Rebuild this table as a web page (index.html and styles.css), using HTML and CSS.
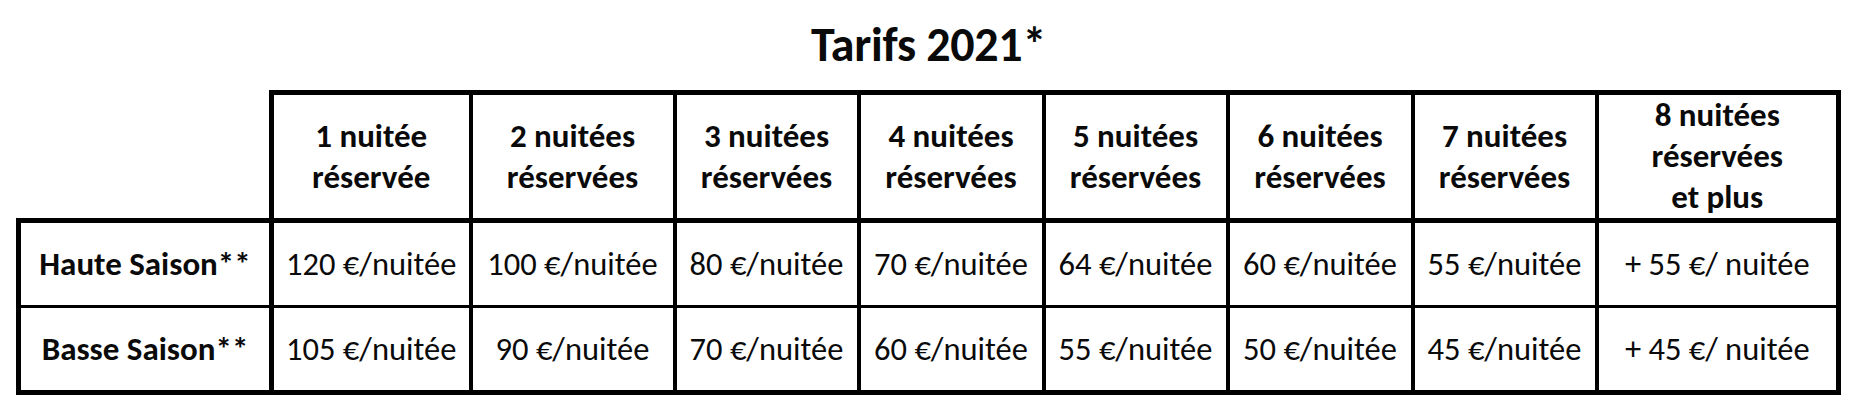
FILE: index.html
```html
<!DOCTYPE html>
<html lang="fr">
<head>
<meta charset="utf-8">
<title>Tarifs 2021</title>
<link rel="stylesheet" href="styles.css">
</head>
<body>
<div class="sheet">
  <h1 class="title">Tarifs 2021*</h1>
  <table class="rates">
    <colgroup>
      <col class="c-label">
      <col class="c-1">
      <col class="c-2">
      <col class="c-n">
      <col class="c-n5">
      <col class="c-n">
      <col class="c-n5">
      <col class="c-n">
      <col class="c-8">
    </colgroup>
    <thead>
      <tr class="head">
        <th class="corner"></th>
        <th>1 nuitée<br>réservée</th>
        <th>2 nuitées<br>réservées</th>
        <th>3 nuitées<br>réservées</th>
        <th>4 nuitées<br>réservées</th>
        <th>5 nuitées<br>réservées</th>
        <th>6 nuitées<br>réservées</th>
        <th>7 nuitées<br>réservées</th>
        <th>8 nuitées<br>réservées<br>et plus</th>
      </tr>
    </thead>
    <tbody>
      <tr class="r1">
        <th class="label">Haute Saison**</th>
        <td>120 €/nuitée</td>
        <td>100 €/nuitée</td>
        <td>80 €/nuitée</td>
        <td>70 €/nuitée</td>
        <td>64 €/nuitée</td>
        <td>60 €/nuitée</td>
        <td>55 €/nuitée</td>
        <td>+ 55 €/ nuitée</td>
      </tr>
      <tr class="r2">
        <th class="label">Basse Saison**</th>
        <td>105 €/nuitée</td>
        <td>90 €/nuitée</td>
        <td>70 €/nuitée</td>
        <td>60 €/nuitée</td>
        <td>55 €/nuitée</td>
        <td>50 €/nuitée</td>
        <td>45 €/nuitée</td>
        <td>+ 45 €/ nuitée</td>
      </tr>
    </tbody>
  </table>
</div>
</body>
</html>
```

FILE: styles.css
```css
html, body {
  margin: 0;
  padding: 0;
  background: #ffffff;
}

body {
  font-family: Carlito, Calibri, Lato, "Open Sans", sans-serif;
  color: #0a0a0a;
}

.sheet {
  width: 1825px;
  margin-left: 16px;
  padding-top: 16px;
}

.title {
  margin: 0 0 16px 0;
  text-align: center;
  font-size: 48px;
  line-height: 58px;
  font-weight: 700;
  letter-spacing: -0.3px;
}

.rates {
  border-collapse: collapse;
  table-layout: fixed;
  width: 1825px;
}

.c-label { width: 253px; }
.c-1 { width: 199px; }
.c-2 { width: 204px; }
.c-n { width: 184px; }
.c-n5 { width: 185px; }
.c-8 { width: 242px; }

.rates th,
.rates td {
  padding: 0;
  text-align: center;
  vertical-align: middle;
  border-left: 4px solid #000;
  border-right: 4px solid #000;
}

.head th {
  font-size: 33px;
  font-weight: 700;
  line-height: 41px;
  height: 123px;
  border-top: 5px solid #000;
  border-bottom: 5px solid #000;
}

.head th:last-child { border-right-width: 5px; }

.head th.corner {
  border-top: none;
  border-left: none;
}

.head th:nth-child(2) { border-left-width: 5px; }

.rates td {
  font-size: 32.5px;
  font-weight: 400;
}

.rates th.label {
  font-size: 33px;
  font-weight: 700;
  border-left-width: 5px;
  border-right-width: 5px;
}

.rates td:last-child { border-right-width: 5px; }

.r1 th, .r1 td {
  height: 82px;
  border-bottom: 3px solid #000;
}

.r2 th, .r2 td {
  height: 82px;
  border-bottom: 5px solid #000;
}
```
